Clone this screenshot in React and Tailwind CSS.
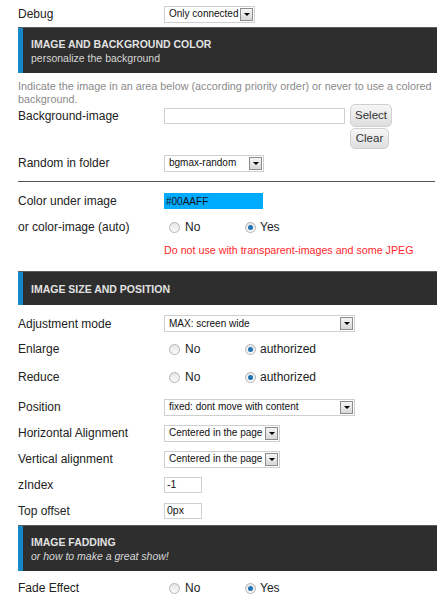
import React from "react";

const Label = ({ children }) => (
  <div className="w-[146px] shrink-0 text-[12px] text-[#222]">{children}</div>
);

const Select = ({ value, width }) => (
  <div
    className={`flex h-[17px] items-center justify-between border border-[#cfcfcf] bg-white ${width}`}
  >
    <span className="pl-[4px] text-[10px] leading-none text-[#111] whitespace-nowrap">
      {value}
    </span>
    <span className="mr-[1px] flex h-[13px] w-[13px] shrink-0 items-center justify-center border border-[#8c8c8c] bg-gradient-to-b from-[#f4f4f4] to-[#d8d8d8]">
      <span className="h-0 w-0 border-x-[3px] border-t-[3px] border-x-transparent border-t-black" />
    </span>
  </div>
);

const Radio = ({ checked }) => (
  <span className="flex h-[11px] w-[11px] items-center justify-center rounded-full border border-[#b4b4b4] bg-gradient-to-b from-[#e6e6e6] to-[#fafafa]">
    {checked && <span className="h-[5px] w-[5px] rounded-full bg-[#1f74b3]" />}
  </span>
);

const RadioPair = ({ a, b, value }) => (
  <div className="flex items-center text-[12px] text-[#222]">
    <div className="flex w-[81px] items-center gap-[5px] pl-[5px]">
      <Radio checked={value === a} />
      <span>{a}</span>
    </div>
    <div className="flex items-center gap-[4px]">
      <Radio checked={value === b} />
      <span>{b}</span>
    </div>
  </div>
);

const Header = ({ title, subtitle, italic }) => (
  <div
    className={`flex border-t border-[#5c5c5c] bg-[#2e2e2e] ${subtitle ? "h-[46px]" : "h-[34px]"}`}
  >
    <div className="w-[5px] shrink-0 bg-[#1588c8]" />
    <div className="flex flex-col justify-center pl-[8px]">
      <div className="text-[10.5px] font-bold leading-[14px] text-[#e2e2e2]">{title}</div>
      {subtitle && (
        <div
          className={`text-[10.5px] leading-[14px] text-[#d6d6d6] ${italic ? "italic" : ""}`}
        >
          {subtitle}
        </div>
      )}
    </div>
  </div>
);

const Row = ({ label, className, children }) => (
  <div className={`flex h-[18px] items-center ${className}`}>
    <Label>{label}</Label>
    {children}
  </div>
);

const SmallInput = ({ value, width }) => (
  <div
    className={`flex h-[16px] items-center border border-[#cfcfcf] bg-white pl-[2px] text-[10.5px] text-[#111] ${width}`}
  >
    {value}
  </div>
);

const Btn = ({ children, className }) => (
  <button
    className={`rounded-[5px] border border-[#d0d0d0] bg-gradient-to-b from-[#f6f6f6] to-[#dedede] text-[11.5px] text-[#333] ${className}`}
  >
    {children}
  </button>
);

export default function App() {
  return (
    <div className="min-h-[610px] bg-white pl-[18px] pt-[5px] font-['Liberation_Sans',Arial,sans-serif]">
      <Row label="Debug" className="h-[18px]">
        <Select value="Only connected" width="w-[91px]" />
      </Row>

      <div className="mt-[4px]">
        <Header title="IMAGE AND BACKGROUND COLOR" subtitle="personalize the background" />
      </div>

      <div className="mt-[7px] h-[24px] text-[10.8px] leading-[13px] text-[#8a8a8a]">
        Indicate the image in an area below (according priority order) or never to use a colored
        background.
      </div>

      <div className="flex items-start">
        <div className="flex h-[23px] items-center">
          <Label>Background-image</Label>
          <div className="h-[16px] w-[181px] border border-[#cfcfcf] bg-white" />
        </div>
        <div className="ml-[5px] flex flex-col items-start gap-[1px]">
          <Btn className="h-[23px] w-[42px]">Select</Btn>
          <Btn className="h-[21px] w-[39px]">Clear</Btn>
        </div>
      </div>

      <Row label="Random in folder" className="mt-[5px]">
        <Select value="bgmax-random" width="w-[100px]" />
      </Row>

      <div className="mr-[2px] mt-[9px] border-t border-[#555]" />

      <Row label="Color under image" className="mt-[10px]">
        <div className="flex h-[16px] w-[99px] items-center bg-[#00aaff] pl-[2px] text-[10px] text-[#111]">
          #00AAFF
        </div>
      </Row>

      <Row label="or color-image (auto)" className="mt-[8px]">
        <RadioPair a="No" b="Yes" value="Yes" />
      </Row>

      <div className="mt-[7px] flex h-[14px] items-center pl-[146px] text-[10.7px] text-[#ff1f2a]">
        Do not use with transparent-images and some JPEG
      </div>

      <div className="mt-[14px]">
        <Header title="IMAGE SIZE AND POSITION" />
      </div>

      <Row label="Adjustment mode" className="mt-[9px] h-[19px]">
        <Select value="MAX: screen wide" width="w-[191px]" />
      </Row>

      <Row label="Enlarge" className="mt-[7px]">
        <RadioPair a="No" b="authorized" value="authorized" />
      </Row>

      <Row label="Reduce" className="mt-[10px]">
        <RadioPair a="No" b="authorized" value="authorized" />
      </Row>

      <Row label="Position" className="mt-[12px]">
        <Select value="fixed: dont move with content" width="w-[191px]" />
      </Row>

      <Row label="Horizontal Alignment" className="mt-[8px]">
        <Select value="Centered in the page" width="w-[116px]" />
      </Row>

      <Row label="Vertical alignment" className="mt-[8px]">
        <Select value="Centered in the page" width="w-[116px]" />
      </Row>

      <Row label="zIndex" className="mt-[8px]">
        <SmallInput value="-1" width="w-[38px]" />
      </Row>

      <Row label="Top offset" className="mt-[8px]">
        <SmallInput value="0px" width="w-[38px]" />
      </Row>

      <div className="mt-[5px]">
        <Header title="IMAGE FADDING" subtitle="or how to make a great show!" italic />
      </div>

      <Row label="Fade Effect" className="mt-[8px]">
        <RadioPair a="No" b="Yes" value="Yes" />
      </Row>
    </div>
  );
}
